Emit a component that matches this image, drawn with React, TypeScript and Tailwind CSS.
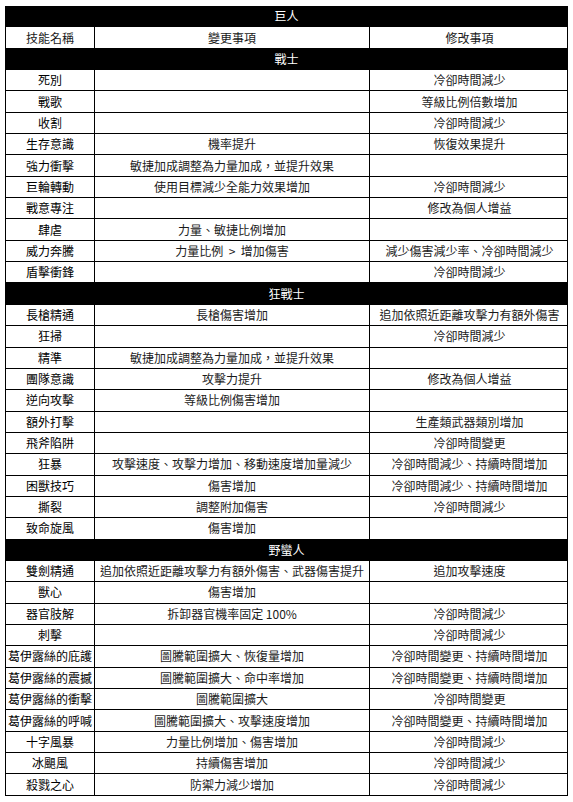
import React from 'react';

type Row = [string, string, string];

const sections: { title: string; rows: Row[] }[] = [
    {
        title: '戰士',
        rows: [
            ['死別', '', '冷卻時間減少'],
            ['戰歌', '', '等級比例倍數增加'],
            ['收割', '', '冷卻時間減少'],
            ['生存意識', '機率提升', '恢復效果提升'],
            ['強力衝擊', '敏捷加成調整為力量加成，並提升效果', ''],
            ['巨輪轉動', '使用目標減少全能力效果增加', '冷卻時間減少'],
            ['戰意專注', '', '修改為個人增益'],
            ['肆虐', '力量、敏捷比例增加', ''],
            ['威力奔騰', '力量比例  >  增加傷害', '減少傷害減少率、冷卻時間減少'],
            ['盾擊衝鋒', '', '冷卻時間減少'],
        ],
    },
    {
        title: '狂戰士',
        rows: [
            ['長槍精通', '長槍傷害增加', '追加依照近距離攻擊力有額外傷害'],
            ['狂掃', '', '冷卻時間減少'],
            ['精準', '敏捷加成調整為力量加成，並提升效果', ''],
            ['團隊意識', '攻擊力提升', '修改為個人增益'],
            ['逆向攻擊', '等級比例傷害增加', ''],
            ['額外打擊', '', '生產類武器類別增加'],
            ['飛斧陷阱', '', '冷卻時間變更'],
            ['狂暴', '攻擊速度、攻擊力增加、移動速度增加量減少', '冷卻時間減少、持續時間增加'],
            ['困獸技巧', '傷害增加', '冷卻時間減少、持續時間增加'],
            ['撕裂', '調整附加傷害', '冷卻時間減少'],
            ['致命旋風', '傷害增加', ''],
        ],
    },
    {
        title: '野蠻人',
        rows: [
            ['雙劍精通', '追加依照近距離攻擊力有額外傷害、武器傷害提升', '追加攻擊速度'],
            ['獸心', '傷害增加', ''],
            ['器官肢解', '拆卸器官機率固定 100%', '冷卻時間減少'],
            ['刺擊', '', '冷卻時間減少'],
            ['葛伊露絲的庇護', '圖騰範圍擴大、恢復量增加', '冷卻時間變更、持續時間增加'],
            ['葛伊露絲的震撼', '圖騰範圍擴大、命中率增加', '冷卻時間變更、持續時間增加'],
            ['葛伊露絲的衝擊', '圖騰範圍擴大', '冷卻時間變更'],
            ['葛伊露絲的呼喊', '圖騰範圍擴大、攻擊速度增加', '冷卻時間變更、持續時間增加'],
            ['十字風暴', '力量比例增加、傷害增加', '冷卻時間減少'],
            ['冰颶風', '持續傷害增加', '冷卻時間減少'],
            ['殺戮之心', '防禦力減少增加', '冷卻時間減少'],
        ],
    },
];

const rowCls = 'grid grid-cols-[89px_275px_199px] h-[21.35px] border-b border-black items-center';

const BlackRow: React.FC<{ label: string }> = ({ label }) => (
    <div className="h-[21.35px] bg-black text-white flex items-center justify-center border-b border-black">
        {label}
    </div>
);

export default function App() {
    return (
        <div className="bg-white w-[573px] h-[802px] pt-[6px] pl-[5px]" style={{ fontFamily: '"Noto Sans CJK TC", "Noto Sans", sans-serif' }}>
            <div className="w-[563px] border-x border-black text-[12px] leading-none text-[#1a1a1a]">
                <BlackRow label="巨人" />
                <div className={rowCls}>
                    <div className="h-full flex items-center justify-center border-r border-black">技能名稱</div>
                    <div className="h-full flex items-center justify-center border-r border-black">變更事項</div>
                    <div className="h-full flex items-center justify-center">修改事項</div>
                </div>
                {sections.map((s) => (
                    <React.Fragment key={s.title}>
                        <BlackRow label={s.title} />
                        {s.rows.map((r, i) => (
                            <div key={i} className={rowCls}>
                                <div className="h-full flex items-center justify-center border-r border-black whitespace-nowrap text-black">{r[0]}</div>
                                <div className="h-full flex items-center justify-center border-r border-black whitespace-pre">{r[1]}</div>
                                <div className="h-full flex items-center justify-center whitespace-nowrap">{r[2]}</div>
                            </div>
                        ))}
                    </React.Fragment>
                ))}
            </div>
        </div>
    );
}
